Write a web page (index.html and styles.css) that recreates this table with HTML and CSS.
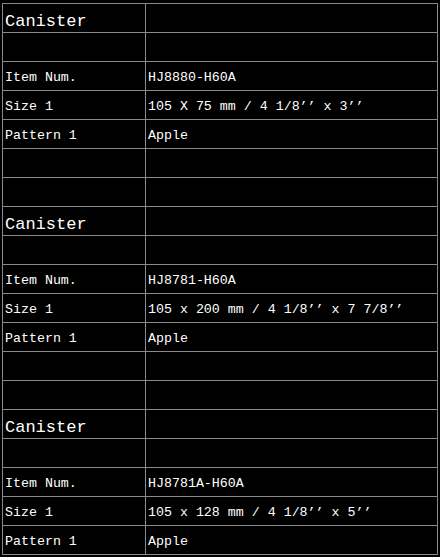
FILE: index.html
```
<!DOCTYPE html>
<html lang="en">
<head>
    <meta charset="UTF-8">
    <meta name="viewport" content="width=device-width, initial-scale=1.0">
    <title>Canister</title>
    <link rel="stylesheet" href="styles.css">
</head>
<body>
    <table class="spec">
        <tr class="head"><td>Canister</td><td></td></tr>
        <tr><td></td><td></td></tr>
        <tr><td>Item Num.</td><td>HJ8880-H60A</td></tr>
        <tr><td>Size 1</td><td>105 X 75 mm / 4 1/8’’ x 3’’</td></tr>
        <tr><td>Pattern 1</td><td>Apple</td></tr>
        <tr><td></td><td></td></tr>
        <tr><td></td><td></td></tr>
        <tr class="head"><td>Canister</td><td></td></tr>
        <tr><td></td><td></td></tr>
        <tr><td>Item Num.</td><td>HJ8781-H60A</td></tr>
        <tr><td>Size 1</td><td>105 x 200 mm / 4 1/8’’ x 7 7/8’’</td></tr>
        <tr><td>Pattern 1</td><td>Apple</td></tr>
        <tr><td></td><td></td></tr>
        <tr><td></td><td></td></tr>
        <tr class="head"><td>Canister</td><td></td></tr>
        <tr><td></td><td></td></tr>
        <tr><td>Item Num.</td><td>HJ8781A-H60A</td></tr>
        <tr><td>Size 1</td><td>105 x 128 mm / 4 1/8’’ x 5’’</td></tr>
        <tr><td>Pattern 1</td><td>Apple</td></tr>
    </table>
</body>
</html>
```

FILE: styles.css
```
body{
    margin: 0;
    padding: 3px 0 0 2px;
    background-color: #000000;
    color: #ffffff;
    font-family: "Liberation Mono", "DejaVu Sans Mono", monospace;
    font-size: 13.3px;
}
.spec{
    width: 436px;
    border-collapse: separate;
    border-spacing: 1px;    /* 線の太さ */
    background-color: #8a8a8a;  /* 線の色 */
    table-layout: fixed;
}
.spec td{
    height: 25px;
    padding: 3px 0 0 2px;
    background-color: #000000;
    vertical-align: middle;
    white-space: nowrap;
    line-height: 15px;
}
.spec td:first-child{
    width: 140px;
}
.head td{
    height: 22px;
    font-size: 17px;
    padding-top: 6px;
    line-height: 19px;
}
```
